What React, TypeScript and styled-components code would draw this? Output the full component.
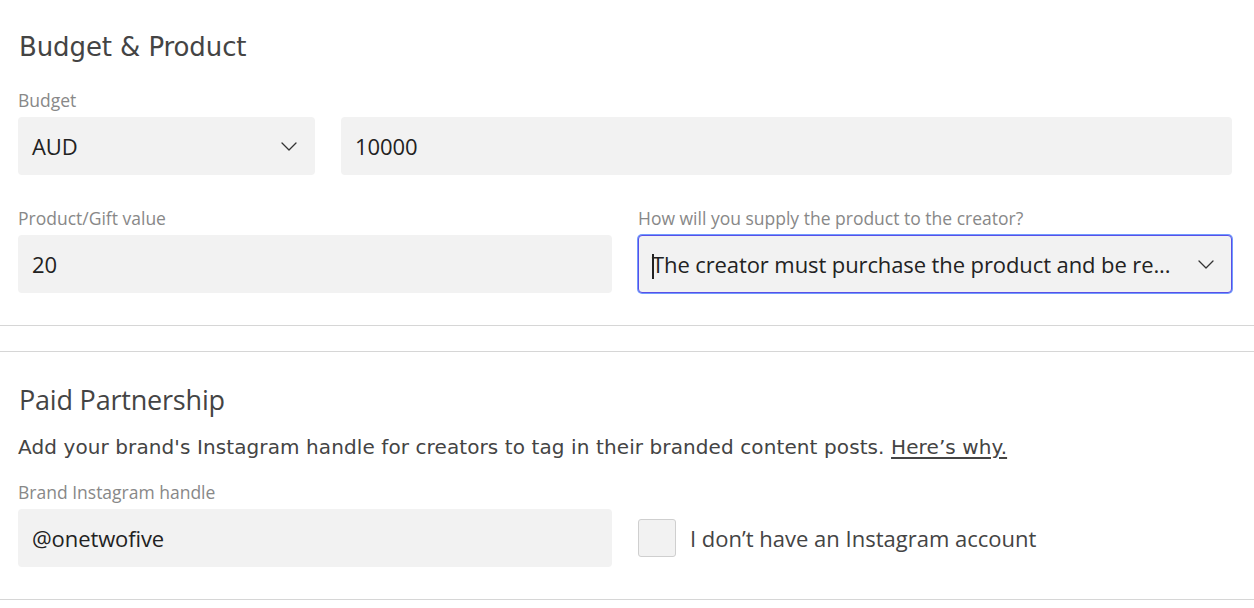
import * as React from 'react'
import styled, { createGlobalStyle } from 'styled-components'

const GlobalStyle = createGlobalStyle`
  body {
    margin: 0;
    background: #fff;
    font-family: "Open Sans", "Noto Sans", sans-serif;
  }
`;

const Page = styled.div`
  width: 1254px;
  box-sizing: border-box;
`;

const Section = styled.section<{ $top: number; $bottom: number }>`
  padding: ${p => p.$top}px 22px ${p => p.$bottom}px 18px;
  border-bottom: 1px solid #d6d6d6;
`;

const Spacer = styled.div`
  height: 25px;
  border-bottom: 1px solid #d6d6d6;
`;

const Heading = styled.h2<{ $geo?: boolean }>`
  margin: 0 0 0 1px;
  font-family: ${p => (p.$geo ? '"DejaVu Sans", sans-serif' : '"Open Sans", sans-serif')};
  font-size: ${p => (p.$geo ? '26px' : '27px')};
  font-weight: 400;
  color: #444;
  line-height: 34px;
  letter-spacing: ${p => (p.$geo ? '-0.1px' : '-0.2px')};
`;

const Intro = styled.p`
  margin: 16px 0 0 0;
  font-family: "DejaVu Sans", sans-serif;
  font-size: 20px;
  color: #444;
  line-height: 28px;
  letter-spacing: 0.1px;
  a {
    color: #444;
    text-decoration: underline;
    text-underline-offset: 3px;
  }
`;

const Row = styled.div<{ $cols: string }>`
  display: grid;
  grid-template-columns: ${p => p.$cols};
  column-gap: 26px;
  align-items: end;
`;

const Field = styled.div`
  display: flex;
  flex-direction: column;
  min-width: 0;
`;

const Label = styled.label`
  font-family: "Open Sans", sans-serif;
  font-size: 17.5px;
  color: #888;
  line-height: 22px;
  margin-bottom: 6px;
  letter-spacing: 0;
`;

const Box = styled.div<{ $focus?: boolean }>`
  height: 58px;
  box-sizing: border-box;
  background: #f2f2f2;
  border-radius: 4px;
  border: 1px solid ${p => (p.$focus ? '#5a4fe6' : 'transparent')};
  box-shadow: ${p => (p.$focus ? '0 0 0 1px #6f9bff' : 'none')};
  display: flex;
  align-items: center;
  padding: 0 17px 0 13px;
  font-family: "Open Sans", sans-serif;
  font-size: 22px;
  color: #222;
  letter-spacing: -0.1px;
`;

const Value = styled.span`
  flex: 1;
  min-width: 0;
  white-space: nowrap;
  margin-right: 20px;
`;

const Caret = styled.span`
  display: inline-block;
  width: 1.5px;
  height: 25px;
  background: #222;
  margin-right: -1.5px;
  vertical-align: middle;
`;

const Chevron = () => (
  <svg width="16" height="9" viewBox="0 0 16 9" fill="none" style={{ flexShrink: 0 }}>
    <path d="M1 1l7 7 7-7" stroke="#333" strokeWidth="1.3" strokeLinecap="round" strokeLinejoin="round" />
  </svg>
);

const CheckRow = styled.label`
  display: flex;
  align-items: center;
  gap: 14px;
  height: 58px;
  font-family: "Open Sans", sans-serif;
  font-size: 22px;
  color: #444;
  letter-spacing: 0;
`;

const CheckBox = styled.span`
  width: 38px;
  height: 38px;
  box-sizing: border-box;
  border: 1px solid #cfcfcf;
  background: #f2f2f2;
  border-radius: 3px;
`;

export default function App() {
  return (
    <Page>
      <GlobalStyle />
      <Section $top={30} $bottom={32}>
        <Heading $geo>Budget &amp; Product</Heading>
        <Row $cols="297px minmax(0, 1fr)" style={{ marginTop: 25 }}>
          <Field>
            <Label>Budget</Label>
            <Box>
              <Value>AUD</Value>
              <Chevron />
            </Box>
          </Field>
          <Field>
            <Box>
              <Value>10000</Value>
            </Box>
          </Field>
        </Row>
        <Row $cols="minmax(0, 1fr) minmax(0, 1fr)" style={{ marginTop: 32 }}>
          <Field>
            <Label>Product/Gift value</Label>
            <Box>
              <Value>20</Value>
            </Box>
          </Field>
          <Field>
            <Label>How will you supply the product to the creator?</Label>
            <Box $focus>
              <Value>
                <Caret />
                The creator must purchase the product and be re...
              </Value>
              <Chevron />
            </Box>
          </Field>
        </Row>
      </Section>
      <Spacer />
      <Section $top={31} $bottom={32}>
        <Heading>Paid Partnership</Heading>
        <Intro>
          Add your brand's Instagram handle for creators to tag in their branded content posts.{' '}
          <a href="#">Here’s why.</a>
        </Intro>
        <Row $cols="minmax(0, 1fr) minmax(0, 1fr)" style={{ marginTop: 20 }}>
          <Field>
            <Label>Brand Instagram handle</Label>
            <Box>
              <Value>@onetwofive</Value>
            </Box>
          </Field>
          <CheckRow>
            <CheckBox />
            I don’t have an Instagram account
          </CheckRow>
        </Row>
      </Section>
    </Page>
  )
}
